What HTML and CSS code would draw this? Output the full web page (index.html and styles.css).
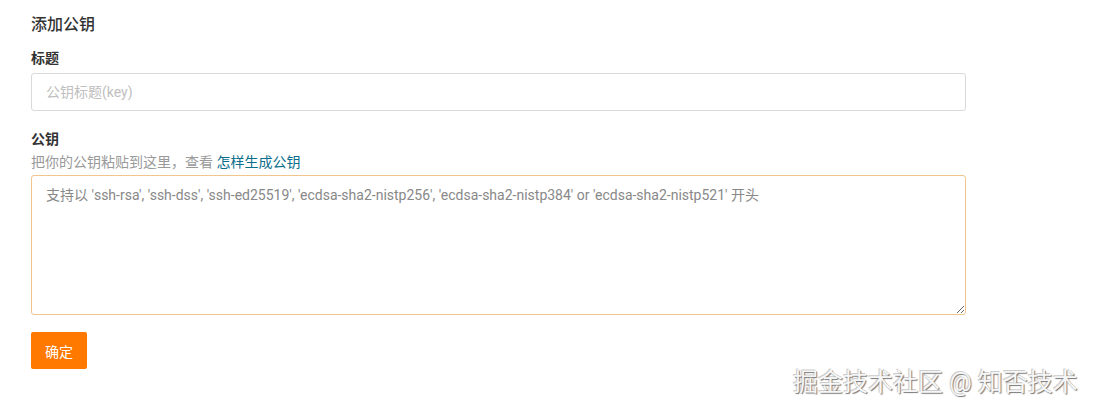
FILE: index.html
```html
<!DOCTYPE html>
<html lang="zh">
<head>
<meta charset="utf-8">
<link rel="stylesheet" href="styles.css">
</head>
<body>
<div class="page">
  <h2 class="title">添加公钥</h2>
  <form class="form">
    <div class="field">
      <label class="label">标题</label>
      <input class="input" type="text" placeholder="公钥标题(key)">
    </div>
    <div class="field field-key">
      <label class="label">公钥</label>
      <p class="hint">把你的公钥粘贴到这里，查看 <a class="link" href="#">怎样生成公钥</a></p>
      <textarea class="textarea" autofocus placeholder="支持以 'ssh-rsa', 'ssh-dss', 'ssh-ed25519', 'ecdsa-sha2-nistp256', 'ecdsa-sha2-nistp384' or 'ecdsa-sha2-nistp521' 开头"></textarea>
    </div>
    <button class="btn" type="button">确定</button>
  </form>
</div>
<div class="watermark">掘金技术社区 @ 知否技术</div>
</body>
</html>
```
FILE: styles.css
```css
* { box-sizing: border-box; }
html, body { margin: 0; padding: 0; background: #fff; }
body {
  font-family: Roboto, "Noto Sans CJK SC", sans-serif;
  color: #333;
  width: 1093px;
  height: 413px;
  overflow: hidden;
  position: relative;
}
.page {
  padding: 13px 0 0 31px;
  width: 966px;
}
.title {
  margin: 0;
  font-size: 16px;
  font-weight: 500;
  line-height: 24px;
  color: #333;
}
.form { margin-top: 11px; }
.field { display: flex; flex-direction: column; }
.label {
  font-size: 14px;
  font-weight: 700;
  line-height: 20px;
  color: #333;
  margin-bottom: 5px;
}
.input {
  height: 38px;
  width: 935px;
  border: 1px solid #d9d9d9;
  border-radius: 3px;
  padding: 0 14px;
  font-family: inherit;
  font-size: 14px;
  color: #333;
  outline: none;
}
.input::placeholder { color: #c0c0c0; }
.field-key { margin-top: 18px; }
.field-key .label { margin-bottom: 3px; }
.hint {
  margin: 0 0 3px;
  font-size: 14px;
  line-height: 20px;
  color: #999;
}
.link { color: #0b6e8a; text-decoration: none; }
.textarea {
  width: 935px;
  height: 140px;
  border: 1px solid #f0c58e;
  border-radius: 3px;
  padding: 9px 14px;
  font-family: inherit;
  font-size: 14px;
  line-height: 20px;
  resize: vertical;
  outline: none;
  caret-color: #333;
}
.textarea::placeholder { color: #888; }
.btn {
  margin-top: 17px;
  width: 56px;
  height: 37px;
  background: #ff7800;
  border: none;
  border-radius: 2px;
  color: #fff;
  font-family: inherit;
  font-size: 14px;
  padding: 0;
}
.watermark {
  position: absolute;
  left: 793px;
  top: 367px;
  font-size: 25px;
  line-height: 32px;
  color: #f6f6f6;
  text-shadow: 1px 1px 1px #777, -1px -1px 0 #ccc;
  font-family: Roboto, "Noto Sans CJK SC", sans-serif;
  white-space: nowrap;
}
```
